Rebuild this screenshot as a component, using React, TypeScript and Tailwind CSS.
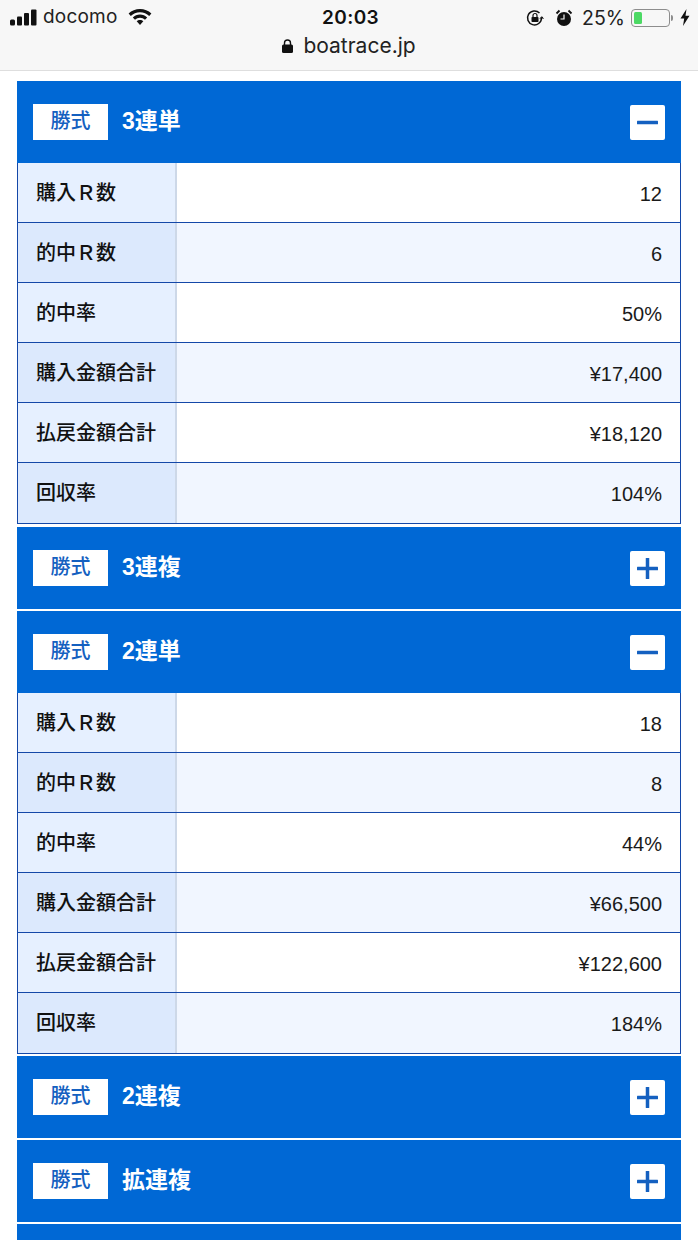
const cjk = "font-['Liberation_Sans','Noto_Sans_CJK_JP',sans-serif]";

interface Section {
  name: string;
  open: boolean;
  values?: string[];
  gap?: string;
}

const labels = ["購入Ｒ数", "的中Ｒ数", "的中率", "購入金額合計", "払戻金額合計", "回収率"];

const sections: Section[] = [
  { name: "3連単", open: true, values: ["12", "6", "50%", "¥17,400", "¥18,120", "104%"], gap: "mb-[3px]" },
  { name: "3連複", open: false },
  { name: "2連単", open: true, values: ["18", "8", "44%", "¥66,500", "¥122,600", "184%"], gap: "mb-[2px]" },
  { name: "2連複", open: false },
  { name: "拡連複", open: false },
];

function StatusBar() {
  return (
    <div className="h-[71px] shrink-0 bg-[#f7f7f7] border-b border-[#dedede] text-[#111] font-['Inter',sans-serif]">
      <div className="h-[35px] flex items-center justify-between pl-[10px] pr-[8px] relative">
        <div className="flex items-center">
          <svg width="28" height="17" viewBox="0 0 28 17" fill="#111">
            <rect x="0" y="10.500" width="5" height="6" rx="1.500" />
            <rect x="7" y="7.500" width="5" height="9" rx="1" />
            <rect x="14" y="4" width="5" height="12.500" rx="1" />
            <rect x="21" y="0.500" width="5.500" height="16" rx="1" />
          </svg>
          <span className="text-[19px] ml-[5px] tracking-[0.2px] text-[#222]">docomo</span>
          <svg className="ml-[10px] mb-[2px]" width="24" height="18" viewBox="0 0 24 18" fill="#111">
            <path d="M12 1C7.6 1 3.6 2.7.6 5.5l2.2 2.4C5.2 5.6 8.4 4.2 12 4.2s6.8 1.4 9.2 3.7l2.2-2.4C20.400 2.700 16.400 1 12 1z" />
            <path d="M12 6.600c-2.800 0-5.300 1.100-7.200 2.800l2.200 2.400c1.300-1.200 3.100-2 5-2s3.700.8 5 2l2.200-2.400c-1.900-1.700-4.400-2.800-7.200-2.800z" />
            <path d="M12 12c-1.300 0-2.500.5-3.300 1.300L12 17l3.300-3.700C14.500 12.500 13.300 12 12 12z" />
          </svg>
        </div>
        <span className="absolute left-[322px] top-[6px] text-[19px] leading-[24px] font-semibold tracking-[0.4px]">20:03</span>
        <div className="flex items-center">
          <svg width="20" height="20" viewBox="0 0 20 20" fill="none" stroke="#111" strokeWidth="1.500">
            <path d="M16.500 10a7 7 0 1 1-2-5" />
            <path d="M15 10.500l1.800-1.800 1.700 1.800" fill="#111" strokeWidth="1" />
            <rect x="6.500" y="9" width="7" height="5" rx="0.800" fill="#111" stroke="none" />
            <path d="M8 9V7.500a2 2 0 0 1 4 0V9" strokeWidth="1.200" />
          </svg>
          <svg className="ml-[10px]" width="18" height="18" viewBox="0 0 18 18">
            <circle cx="9" cy="10" r="7" fill="#111" />
            <path d="M9 5.500V10H5.500" fill="none" stroke="#f7f7f7" strokeWidth="1.200" />
            <path d="M1.500 4.500L4.500 1.500M16.500 4.500L13.500 1.500" stroke="#111" strokeWidth="1.800" />
          </svg>
          <span className="text-[19.500px] ml-[9px] pt-[2px] text-[#222]">25%</span>
          <div className="ml-[6px] w-[39px] h-[18px] rounded-[4px] border border-[#8d8d8d] p-[2px]">
            <div className="w-[8px] h-full rounded-[1.500px] bg-[#4cd964]" />
          </div>
          <div className="ml-[1px] w-[2px] h-[6px] rounded-r bg-[#8d8d8d]" />
          <svg className="ml-[7px]" width="10" height="17" viewBox="0 0 10 17" fill="#111">
            <path d="M6.500 0L0.500 9.500H4.200L3 17L9.500 6.800H5.500z" />
          </svg>
        </div>
      </div>
      <div className="h-[22px] flex items-center justify-center text-[21px] leading-[22px] text-[#222]">
        <svg className="mr-[10px]" width="11" height="14" viewBox="0 0 11 14" fill="#111">
          <rect x="0" y="5.500" width="11" height="8.500" rx="1.500" />
          <path d="M2.500 6V4a3 3 0 0 1 6 0v2" fill="none" stroke="#111" strokeWidth="1.400" />
        </svg>
        boatrace.jp
      </div>
    </div>
  );
}

function Header({ name, open }: { name: string; open: boolean }) {
  return (
    <div className="h-[82px] bg-[#0068d5] flex items-center justify-between pl-[16px] pr-[16px]">
      <div className="flex items-center">
        <div className={`w-[75px] h-[36px] bg-white flex items-center justify-center pb-[2px] text-[#1460c0] text-[20px] font-medium ${cjk}`}>
          勝式
        </div>
        <span className={`ml-[14px] pb-[2px] text-white text-[23px] font-bold ${cjk}`}>{name}</span>
      </div>
      <div className="w-[35px] h-[35px] bg-white rounded-[2px] flex items-center justify-center">
        <svg width="21" height="21" viewBox="0 0 21 21" fill="#1460c0">
          <rect x="0" y="8.750" width="21" height="3.500" rx="0.500" />
          {!open && <rect x="8.750" y="0" width="3.500" height="21" rx="0.500" />}
        </svg>
      </div>
    </div>
  );
}

function StatTable({ values, gap }: { values: string[]; gap?: string }) {
  return (
    <div className={`border-x border-b border-[#1448a8] ${gap}`}>
      {labels.map((label, i) => {
        const even = i % 2 === 1;
        const last = i === labels.length - 1;
        return (
          <div key={label} className={`flex h-[60px] ${last ? "" : "border-b border-[#1448a8]"}`}>
            <div
              className={`w-[159px] shrink-0 flex items-center pl-[18px] border-r-2 border-[#cdd8e8] text-[#111] text-[20px] font-medium ${cjk} ${
                even ? "bg-[#dce9fd]" : "bg-[#e6f0ff]"
              }`}
            >
              {label}
            </div>
            <div
              className={`flex-1 flex items-center justify-end pr-[18px] pt-[2px] text-[#1a1a1a] text-[20px] font-['Liberation_Sans',sans-serif] ${
                even ? "bg-[#f1f6ff]" : "bg-white"
              }`}
            >
              {values[i]}
            </div>
          </div>
        );
      })}
    </div>
  );
}

export default function App() {
  return (
    <div className="w-[698px] h-[1240px] overflow-hidden bg-white flex flex-col">
      <StatusBar />
      <div className="px-[17px] pt-[10px] w-[698px]">
        {sections.map((s) => (
          <div key={s.name}>
            <Header name={s.name} open={s.open} />
            {s.values ? <StatTable values={s.values} gap={s.gap} /> : <div className="h-[2px]" />}
          </div>
        ))}
        <div className="h-[82px] bg-[#0068d5]" />
      </div>
    </div>
  );
}
